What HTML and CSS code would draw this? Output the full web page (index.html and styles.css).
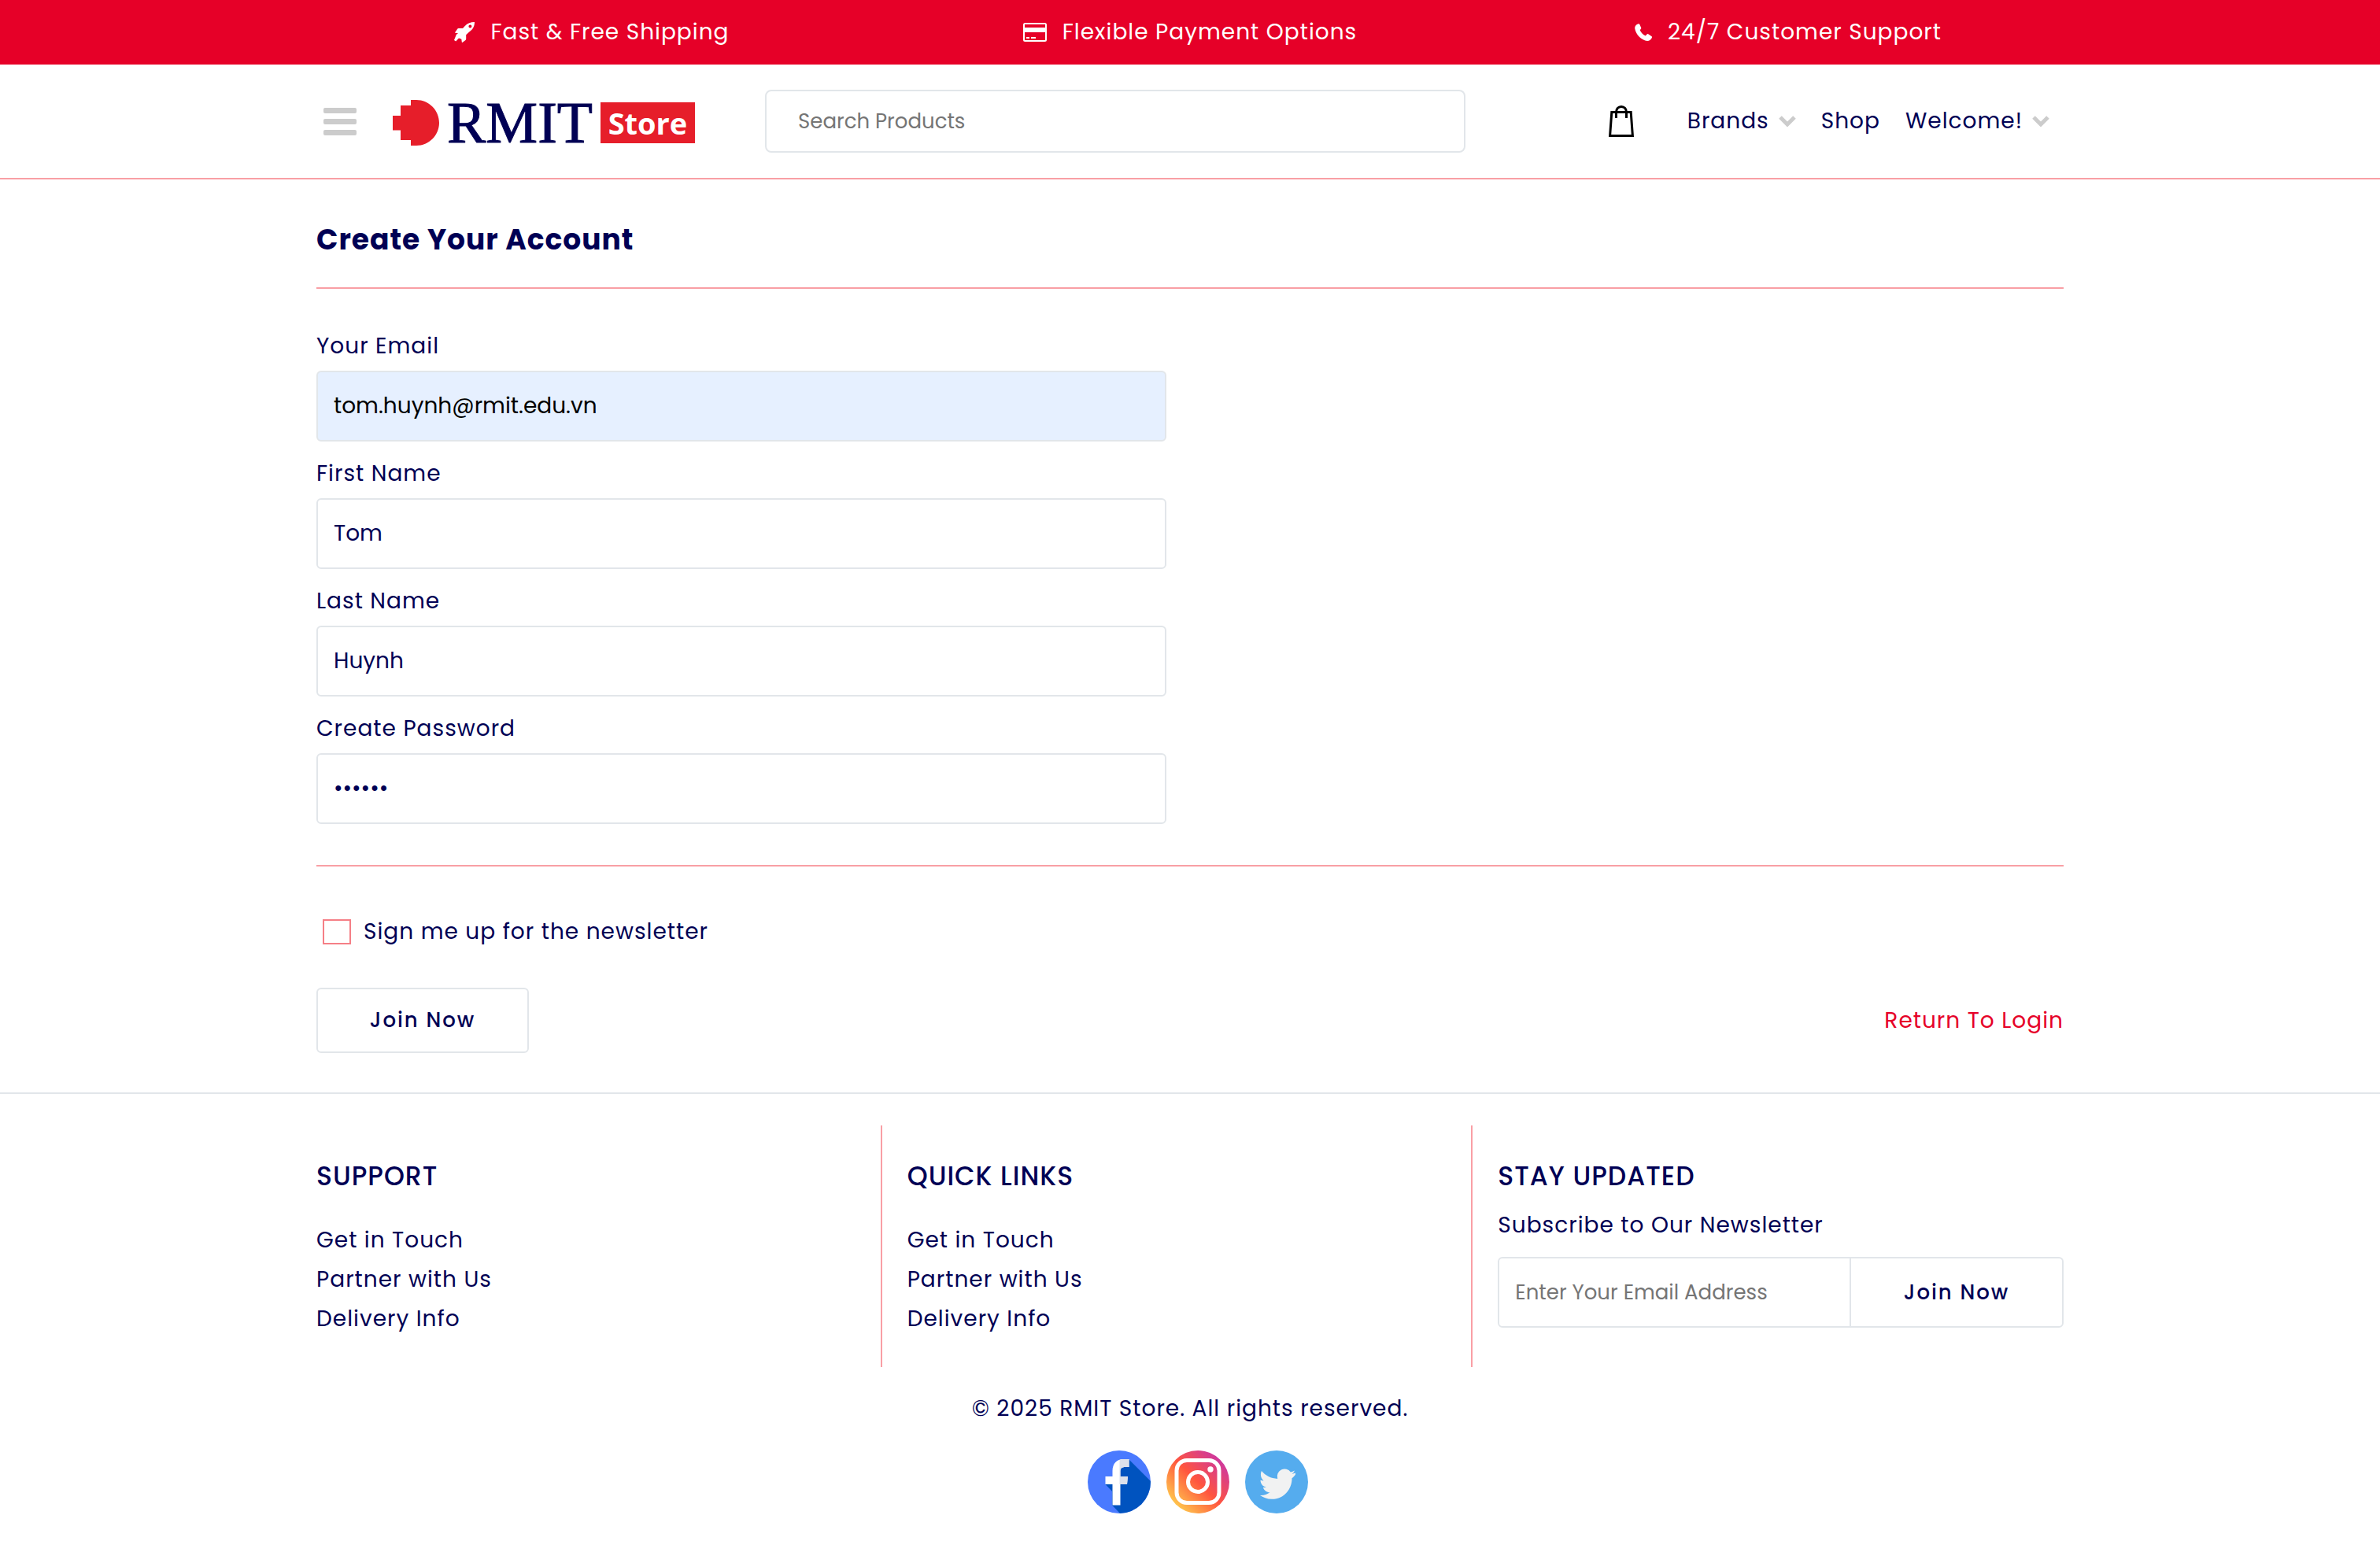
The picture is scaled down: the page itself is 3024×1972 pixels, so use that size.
FILE: index.html
```html
<!DOCTYPE html>
<html lang="en">
<head>
<meta charset="utf-8">
<meta name="viewport" content="width=device-width, initial-scale=1">
<title>Create Your Account | RMIT Store</title>
<link rel="stylesheet" href="styles.css">
</head>
<body>
<div class="topbar">
  <ul class="perks">
    <li class="perk">
      <svg class="perk-icon rocket" viewBox="0 0 26 26" aria-hidden="true"><path fill="currentColor" fill-rule="evenodd" d="M26 0c-5 0-9 1.600-12.500 5.200L11 8H5.500c-.6 0-1 .2-1.300.7L1.300 13c-.2.500 0 .9.600.9l3.200.2-1.800 1.500c-.5.400-.7.800-.9 1.400L0 23l2.200 1.600L6 20.500l3.300 1.300.5 3.600c.1.700.6.800 1 .4l3.700-2.900c.5-.4.700-.8.700-1.400v-5.300l3.500-3.200C23 10 26 6 26 0zm-5.600 3.600a2 2 0 1 1 0 4 2 2 0 0 1 0-4z"/></svg>
      <span>Fast &amp; Free Shipping</span>
    </li>
    <li class="perk">
      <svg class="perk-icon card" viewBox="0 0 30 24" aria-hidden="true"><path fill="currentColor" fill-rule="evenodd" d="M2.500 0h25A2.500 2.500 0 0 1 30 2.500v19a2.500 2.500 0 0 1-2.500 2.500h-25A2.500 2.500 0 0 1 0 21.500v-19A2.500 2.500 0 0 1 2.500 0zM2 2v4h26V2zm0 10v10h26V12zm2 6h4v2H4zm6 0h6v2h-6z"/></svg>
      <span>Flexible Payment Options</span>
    </li>
    <li class="perk">
      <svg class="perk-icon phone" viewBox="0 0 22 22" aria-hidden="true"><path fill="currentColor" d="M4.800.2C2 1 0 3.200.2 6 .8 10 3 14 5.800 16.700 8.600 19.500 12.500 21.700 16 22c2.800 0 5-1.800 6-4.600.1-.5 0-.9-.4-1.200l-4.400-2.900c-.6-.3-1-.3-1.500.1l-2 2c-3.200-1.400-5.600-4-7-7.200l1.200-1.400c.4-.5.500-1 .3-1.500L6.200.8C5.900.2 5.400 0 4.800.2z"/></svg>
      <span>24/7 Customer Support</span>
    </li>
  </ul>
</div>

<header class="header">
  <div class="container header-row">
    <button class="menu-button" type="button" aria-label="Open menu"><span></span><span></span><span></span></button>
    <a class="logo" href="#">
      <svg class="logo-mark" viewBox="0 0 59 58" aria-hidden="true"><path fill="#e61e2a" d="M23 0h7c16 0 29 13 29 29S46 58 30 58h-7v-7H10V38.500H0V20h10V7h13z"/></svg>
      <span class="logo-name">RMIT</span>
      <span class="logo-tag">Store</span>
    </a>
    <input class="search" type="search" placeholder="Search Products" aria-label="Search Products">
    <nav class="nav">
      <a class="bag" href="#" aria-label="Shopping bag">
        <svg viewBox="0 0 32 40" aria-hidden="true"><path fill="none" stroke="#000" stroke-width="3" d="M3.800 8.500h24.400l2.200 30H1.600zM9.500 16V9c0-4.500 2.500-7.500 6.500-7.500s6.500 3 6.500 7.500v7"/></svg>
      </a>
      <a class="nav-link" href="#">Brands <svg class="chevron" viewBox="0 0 22 14" aria-hidden="true"><path fill="none" stroke="#ccc" stroke-width="5" d="M2 2l9 9L20 2"/></svg></a>
      <a class="nav-link" href="#">Shop</a>
      <a class="nav-link" href="#">Welcome! <svg class="chevron" viewBox="0 0 22 14" aria-hidden="true"><path fill="none" stroke="#ccc" stroke-width="5" d="M2 2l9 9L20 2"/></svg></a>
    </nav>
  </div>
</header>

<main class="container">
  <h1 class="title">Create Your Account</h1>
  <hr class="rule">
  <form class="signup">
    <div class="fields">
      <label class="label" for="email">Your Email</label>
      <input class="field field-filled" id="email" type="email" value="tom.huynh@rmit.edu.vn">
      <label class="label" for="first">First Name</label>
      <input class="field" id="first" type="text" value="Tom">
      <label class="label" for="last">Last Name</label>
      <input class="field" id="last" type="text" value="Huynh">
      <label class="label" for="password">Create Password</label>
      <input class="field" id="password" type="password" value="secret">
    </div>
    <hr class="rule">
    <div class="optin">
      <input class="check" id="newsletter" type="checkbox">
      <label for="newsletter">Sign me up for the newsletter</label>
    </div>
    <div class="actions">
      <button class="button" type="submit">Join Now</button>
      <a class="login-link" href="#">Return To Login</a>
    </div>
  </form>
</main>

<footer class="footer">
  <div class="container columns">
    <section class="column">
      <h2 class="column-title">SUPPORT</h2>
      <ul class="links">
        <li><a href="#">Get in Touch</a></li>
        <li><a href="#">Partner with Us</a></li>
        <li><a href="#">Delivery Info</a></li>
      </ul>
    </section>
    <section class="column">
      <h2 class="column-title">QUICK LINKS</h2>
      <ul class="links">
        <li><a href="#">Get in Touch</a></li>
        <li><a href="#">Partner with Us</a></li>
        <li><a href="#">Delivery Info</a></li>
      </ul>
    </section>
    <section class="column">
      <h2 class="column-title">STAY UPDATED</h2>
      <form class="subscribe">
        <label for="subscribe">Subscribe to Our Newsletter</label>
        <div class="subscribe-row">
          <input class="subscribe-input" id="subscribe" type="email" placeholder="Enter Your Email Address">
          <button class="subscribe-button" type="submit">Join Now</button>
        </div>
      </form>
    </section>
  </div>
  <p class="copyright">© 2025 RMIT Store. All rights reserved.</p>
  <ul class="social">
    <li><a href="#" aria-label="Facebook">
      <svg viewBox="0 0 80 80" aria-hidden="true">
        <defs><clipPath id="disc"><circle cx="40" cy="40" r="40"/></clipPath></defs>
        <g clip-path="url(#disc)">
          <path fill="#4a7aff" d="M0 0h80v80H0z"/>
          <path fill="#0053bf" d="M52.500 11.500L82 41v41H43L31 69.500V52L22.500 43z"/>
          <path fill="#fff" d="M31.500 69.500V43h-9V33h9V26c0-9.500 5.500-15 14-15h7v10h-4.500c-5 0-6.500 2-6.500 6v6h9.500L50 43h-8.500v26.500z"/>
          <path fill="#dce1eb" d="M40.500 12c1.500-.6 3-1 5-1h7v10h-4.500c-5 0-6.500 2-6.500 6v6h9.500L50 43h-9.500z"/>
        </g>
      </svg></a></li>
    <li><a href="#" aria-label="Instagram">
      <svg viewBox="0 0 80 80" aria-hidden="true">
        <defs><linearGradient id="sunset" x1="12" y1="68" x2="68" y2="12" gradientUnits="userSpaceOnUse"><stop offset="0" stop-color="#ffc24c"/><stop offset=".5" stop-color="#ff553e"/><stop offset="1" stop-color="#d0389b"/></linearGradient></defs>
        <circle cx="40" cy="40" r="40" fill="url(#sunset)"/>
        <rect x="13" y="12.500" width="54" height="54" rx="13" fill="none" stroke="#fff" stroke-width="5"/>
        <circle cx="40" cy="40" r="12.500" fill="none" stroke="#fff" stroke-width="5"/>
        <circle cx="56" cy="24" r="3.700" fill="#fff"/>
      </svg></a></li>
    <li><a href="#" aria-label="Twitter">
      <svg viewBox="0 0 80 80" aria-hidden="true">
        <circle cx="40" cy="40" r="40" fill="#55acee"/>
        <path fill="#f1f2f2" d="M64 28.500c-1.300.6-3 1.100-4.400 1.200 1.600-1 2.700-2.400 3.300-4.200-1.500.9-3.200 1.500-5 1.900a9.500 9.500 0 0 0-16.700 8.500c-8.400-.4-15.500-4-20.300-9.900-1.700 4-1.200 9 2.600 12.400-1.400 0-2.800-.4-4-1 0 4.600 3 8.300 7.400 9.300-1.300.4-2.700.4-4.100.2 1.200 3.700 4.600 6.200 8.700 6.300-3.600 2.700-7.700 4.200-12.500 3.800 3.800 2.600 8.600 4.800 15 4.800 16.600-.2 25.700-13.700 25.500-26.600 1.800-1.200 3.400-2.800 4.500-4.700z"/>
      </svg></a></li>
  </ul>
</footer>
</body>
</html>
```

FILE: styles.css
```css
:root {
  --navy: #000054;
  --red: #e60028;
  --pink: #f99fa5;
  --line: #e2e6ea;
}

* { box-sizing: border-box; }

body {
  margin: 0;
  background: #fff;
  color: var(--navy);
  font-family: "Poppins", "Inter", "Open Sans", sans-serif;
  font-size: 28px;
  line-height: 42px;
  letter-spacing: 1px;
}

a { color: inherit; text-decoration: none; }
ul { margin: 0; padding: 0; list-style: none; }
svg { display: block; }
input, button { font-family: inherit; color: inherit; margin: 0; }
::placeholder { color: #757575; opacity: 1; }

.container { max-width: 2284px; margin: 0 auto; padding: 0 32px; }

/* Announcement bar */
.topbar { background: var(--red); color: #fff; }
.perks {
  display: grid;
  grid-template-columns: repeat(3, 1fr);
  max-width: 2280px;
  margin: 0 auto;
  padding: 20px 0;
}
.perk { display: flex; justify-content: center; align-items: center; gap: 20px; }
.rocket { width: 26px; height: 26px; }
.card { width: 30px; height: 24px; }
.phone { width: 22px; height: 22px; }

/* Header */
.header { border-bottom: 2px solid var(--pink); }
.header-row { display: flex; align-items: center; padding-top: 32px; padding-bottom: 32px; }
.menu-button {
  display: flex;
  flex-direction: column;
  gap: 7px;
  width: 42px;
  margin-left: 9px;
  padding: 0;
  border: 0;
  background: none;
}
.menu-button span { height: 7px; border-radius: 2px; background: #ccc; }
.logo { display: flex; align-items: center; margin-left: 46px; padding-top: 4px; letter-spacing: normal; }
.logo-mark { width: 59px; height: 58px; }
.logo-name {
  margin-left: 10px;
  font: 74px/52px "Liberation Serif", serif;
  -webkit-text-stroke: 1px var(--navy);
}
.logo-tag {
  width: 120px;
  margin-left: 10px;
  background: #e61e2a;
  color: #fff;
  font: bold 38px/52px "Open Sans", sans-serif;
  text-align: center;
}
.search {
  flex: 0 1 890px;
  min-width: 0;
  height: 80px;
  margin-left: 89px;
  padding: 0 40px;
  border: 2px solid var(--line);
  border-radius: 8px;
  background: #fff;
  font-size: 26px;
  appearance: none;
}
.nav {
  display: flex;
  align-items: center;
  gap: 32px;
  margin-left: auto;
  margin-right: 18px;
}
.bag { margin-right: 36px; }
.bag svg { width: 32px; height: 40px; }
.nav-link { display: flex; align-items: center; gap: 12px; }
.chevron { width: 22px; height: 14px; }

/* Account form */
.title { margin: 56px 0 39px; font-size: 36px; font-weight: 700; line-height: 42px; }
.rule { height: 2px; margin: 0; border: 0; background: var(--pink); }
.fields {
  display: flex;
  flex-direction: column;
  max-width: 1080px;
  padding: 52px 0;
}
.label { margin-bottom: 10px; }
.field {
  height: 90px;
  padding: 0 20px;
  border: 2px solid var(--line);
  border-radius: 6px;
  background: #fff;
  font-size: 28px;
}
.field + .label { margin-top: 20px; }
.field-filled { background: #e6f0ff; color: #000; }
.optin { display: flex; align-items: center; gap: 16px; padding: 62px 8px 50px; }
.check {
  width: 36px;
  height: 32px;
  border: 2px solid #f57f86;
  background: #fff;
  appearance: none;
}
.actions { display: flex; justify-content: space-between; align-items: center; padding-bottom: 50px; }
.button,
.subscribe-button {
  width: 270px;
  background: none;
  font-size: 26px;
  font-weight: 500;
  letter-spacing: 2px;
}
.button {
  height: 83px;
  border: 2px solid var(--line);
  border-radius: 6px;
}
.login-link { color: var(--red); }

/* Footer */
.footer { border-top: 2px solid var(--line); padding-top: 40px; }
.columns { display: grid; grid-template-columns: repeat(3, minmax(0, 1fr)); gap: 32px; }
.column { padding: 44px 0 36px; border-right: 2px solid var(--pink); }
.column:last-child { border-right: 0; }
.column-title { margin: 0; font-size: 33px; font-weight: 500; line-height: 42px; }
.links { margin-top: 35px; line-height: 50px; }
.subscribe { margin-top: 20px; }
.subscribe-row {
  display: flex;
  height: 90px;
  margin-top: 19px;
  border: 2px solid var(--line);
  border-radius: 6px;
}
.subscribe-input {
  flex: 1;
  min-width: 0;
  padding: 0 20px;
  border: 0;
  background: none;
  font-size: 26px;
}
.subscribe-button {
  border: 0;
  border-left: 2px solid var(--line);
}
.copyright { margin: 32px 0; text-align: center; }
.social { display: flex; justify-content: center; }
.social li { margin-left: 20px; }
.social svg { width: 80px; height: 80px; }
```
